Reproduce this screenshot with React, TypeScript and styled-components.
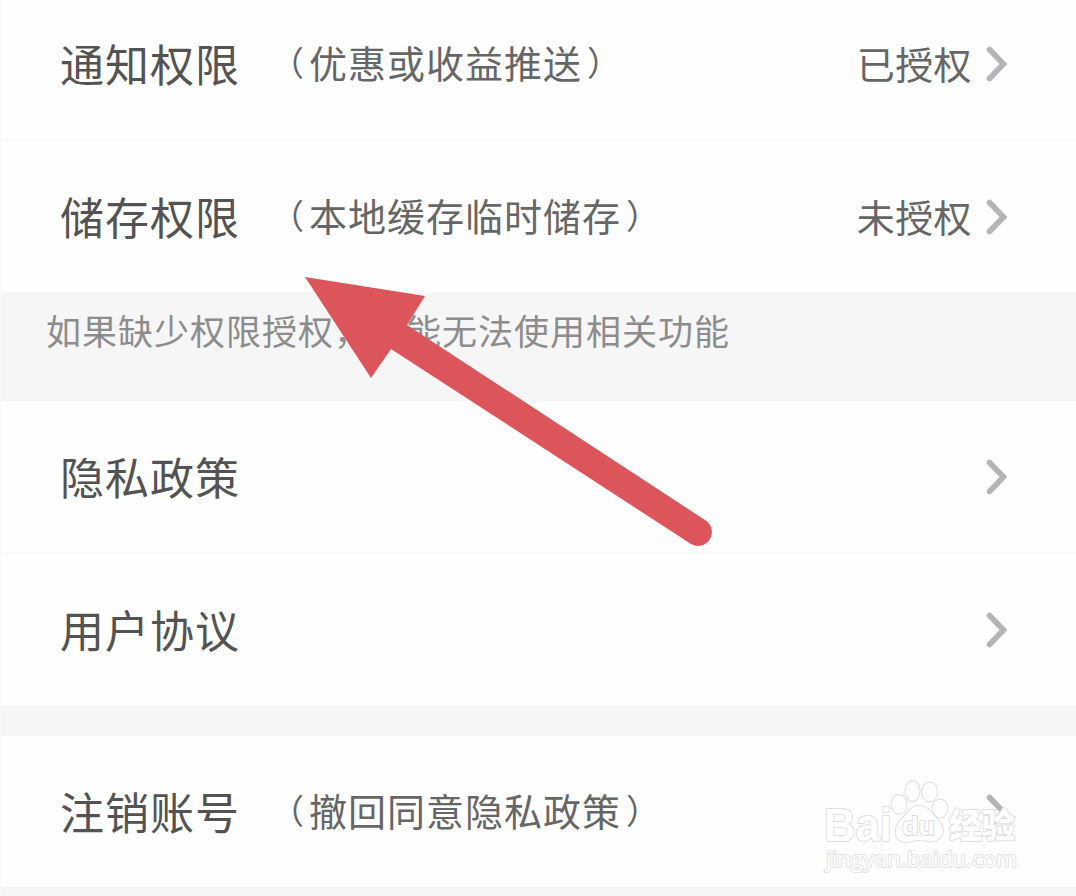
import React from "react";
import styled, { createGlobalStyle } from "styled-components";

const GlobalStyle = createGlobalStyle`
  * {
    box-sizing: border-box;
  }
  body {
    margin: 0;
    background-color: #fefefe;
    font-family: "Noto Sans CJK SC", "Noto Sans", sans-serif;
  }
`;

const Page = styled.main`
  position: relative;
  width: 1076px;
  height: 896px;
  overflow: hidden;
  background-color: #f6f6f6;
  border-left: 1px solid #f8f8f8;
`;

const Group = styled.section<{ $clipped?: boolean }>`
  margin-top: ${(props) => (props.$clipped ? "-12px" : "0")};
  background-color: #fefefe;
`;

const Row = styled.div`
  display: flex;
  align-items: center;
  height: 151px;
  padding: 0 69px 0 59px;
  & + & {
    height: 153px;
    border-top: 2px solid #f9f9f9;
  }
`;

const Title = styled.span`
  padding-bottom: 1px;
  font-size: 44px;
  line-height: 64px;
  letter-spacing: 1px;
  color: #535353;
`;

const Hint = styled.span`
  display: flex;
  margin-left: 30px;
  padding-bottom: 3px;
  font-size: 38px;
  line-height: 56px;
  letter-spacing: 1px;
  color: #666;
`;

const Paren = styled.span<{ side: "left" | "right" }>`
  width: 39px;
  padding-left: ${(props) => (props.side === "left" ? "0" : "5px")};
  font-size: 34px;
  letter-spacing: 0;
`;

const Status = styled.span`
  padding-bottom: 1px;
  font-size: 38px;
  line-height: 56px;
  letter-spacing: 0.4px;
  color: #666;
`;

const Side = styled.div`
  display: flex;
  align-items: center;
  gap: 13px;
  margin-left: auto;
`;

const Note = styled.p`
  height: 109px;
  margin: 0;
  padding: 12px 0 0 45px;
  font-size: 35px;
  line-height: 52px;
  letter-spacing: 1px;
  color: #8c8c8c;
`;

const Gap = styled.div`
  height: 31px;
`;

const Arrow = styled.svg`
  position: absolute;
  left: 298px;
  top: 270px;
`;

const Watermark = styled.svg`
  position: absolute;
  left: 819px;
  top: 770px;
`;

interface IRow {
  title: string;
  hint?: string;
  status?: string;
}

const permissions: IRow[] = [
  { title: "通知权限", hint: "优惠或收益推送", status: "已授权" },
  { title: "储存权限", hint: "本地缓存临时储存", status: "未授权" },
];

const policies: IRow[] = [{ title: "隐私政策" }, { title: "用户协议" }];

const account: IRow[] = [{ title: "注销账号", hint: "撤回同意隐私政策" }];

function Chevron() {
  return (
    <svg width="22" height="38" viewBox="0 0 22 38" fill="none">
      <path
        d="M4.5 4.5L18.5 19L4.5 33.5"
        stroke="#b4b4b8"
        strokeWidth="5.6"
        strokeLinecap="round"
      />
    </svg>
  );
}

function SettingRow({ title, hint, status }: IRow) {
  return (
    <Row>
      <Title>{title}</Title>
      {hint ? (
        <Hint>
          <Paren side="left">（</Paren>
          {hint}
          <Paren side="right">）</Paren>
        </Hint>
      ) : null}
      <Side>
        {status ? <Status>{status}</Status> : null}
        <Chevron />
      </Side>
    </Row>
  );
}

function SettingGroup({ rows, clipped }: { rows: IRow[]; clipped?: boolean }) {
  return (
    <Group $clipped={clipped}>
      {rows.map((row) => (
        <SettingRow key={row.title} {...row} />
      ))}
    </Group>
  );
}

function BaiduMark() {
  return (
    <Watermark width="210" height="110" viewBox="820 770 210 110">
      <g
        fill="#fefefe"
        stroke="#dedede"
        strokeWidth="2"
        strokeLinejoin="round"
        paintOrder="stroke"
        fontFamily="'Liberation Sans', sans-serif"
      >
        <text
          x="824"
          y="841"
          fontSize="46"
          fontWeight="700"
          textLength="68"
          lengthAdjust="spacingAndGlyphs"
        >
          Bai
        </text>
        <ellipse cx="899" cy="804.5" rx="7.5" ry="9.5" />
        <ellipse cx="912.5" cy="791" rx="7" ry="10" />
        <ellipse cx="929.5" cy="792" rx="7.5" ry="9.5" />
        <ellipse cx="940" cy="808.5" rx="7.5" ry="9" />
        <path d="M919 806C911 806 907 814 901 820C894 827 893 840 904 842C910 842 914 840 919 840C925 840 929 842 934 841C945 838 945 827 938 820C931 813 928 806 919 806Z" />
        <text
          x="902"
          y="835"
          fontSize="25"
          fontWeight="700"
          textLength="33"
          lengthAdjust="spacingAndGlyphs"
        >
          du
        </text>
        <text
          x="949"
          y="838"
          fontSize="34"
          fontWeight="900"
          fontFamily="'Noto Sans CJK SC', sans-serif"
          textLength="66"
          lengthAdjust="spacingAndGlyphs"
        >
          经验
        </text>
        <text
          x="826"
          y="867"
          fontSize="22"
          fontWeight="400"
          fontFamily="'Open Sans', sans-serif"
          stroke="#e2e2e2"
          textLength="191"
          lengthAdjust="spacingAndGlyphs"
        >
          jingyan.baidu.com
        </text>
      </g>
    </Watermark>
  );
}

function App() {
  return (
    <Page>
      <GlobalStyle />
      <SettingGroup rows={permissions} clipped />
      <Note>如果缺少权限授权，可能无法使用相关功能</Note>
      <SettingGroup rows={policies} />
      <Gap />
      <SettingGroup rows={account} />
      <Arrow width="420" height="280" viewBox="299 270 420 280">
        <path
          d="M305 277L425 296L407 325L705 520A13.8 13.8 0 0 1 691 544L391 349L371 378Z"
          fill="#dc555b"
        />
      </Arrow>
      <BaiduMark />
    </Page>
  );
}

export default App;
